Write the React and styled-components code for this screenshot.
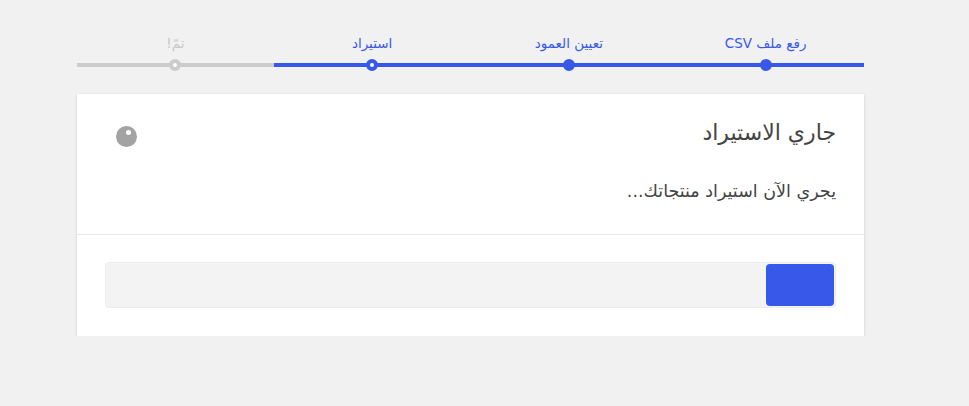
import React from 'react';
import styled, {createGlobalStyle} from 'styled-components';

const GlobalStyle = createGlobalStyle`
  html, body {
    margin: 0;
    padding: 0;
    background: #f1f1f1;
    font-family: "DejaVu Sans", "Liberation Sans", sans-serif;
  }
`

const Page = styled.div`
  width: 787px;
  margin: 0 0 0 77px;
  padding-top: 33px;
  direction: rtl;
`

const Steps = styled.ol`
  display: flex;
  list-style: none;
  margin: 0 0 27px;
  padding: 0;
`

const Step = styled.li`
  position: relative;
  flex: 1;
  text-align: center;
  font-size: 13.5px;
  line-height: 20px;
  padding-bottom: 10px;
  color: ${p => p.state === 'todo' ? '#c8c8c8' : '#3858e9'};
  border-bottom: 4px solid ${p => p.state === 'todo' ? '#cccccc' : '#3858e9'};

  &::before {
    content: "";
    position: absolute;
    bottom: -8px;
    left: 50%;
    margin-left: -6px;
    width: 4px;
    height: 4px;
    border-radius: 50%;
    border: 4px solid ${p => p.state === 'todo' ? '#cccccc' : '#3858e9'};
    background: ${p => p.state === 'done' ? '#3858e9' : '#fff'};
  }
`

const Card = styled.div`
  background: #fff;
  box-shadow: 0 1px 3px rgba(0, 0, 0, 0.15);
`

const Header = styled.header`
  display: flex;
  justify-content: space-between;
  align-items: flex-start;
  padding: 26px 28px 31px 39px;
  border-bottom: 1px solid #e8e8e8;
`

const Heading = styled.div`
  color: #555;
`

const Title = styled.h2`
  margin: 0 0 33px;
  font-size: 22px;
  font-weight: normal;
  line-height: 26px;
  color: #444;
`

const Text = styled.p`
  margin: 0;
  font-size: 17.5px;
  line-height: 24px;
  color: #444;
`

// grey ball with a light spot, like the WP loading spinner
const Spinner = styled.div`
  position: relative;
  width: 21px;
  height: 21px;
  margin-top: 6px;
  border-radius: 50%;
  background: #a3a3a3;

  &::after {
    content: "";
    position: absolute;
    top: 4px;
    left: 10px;
    width: 5px;
    height: 5px;
    border-radius: 50%;
    background: #fff;
  }
`

const Body = styled.section`
  padding: 27px 28px 28px;
`

const Progress = styled.div`
  display: flex;
  height: 42px;
  padding: 1px;
  border: 1px solid #ececec;
  border-radius: 4px;
  background: #f3f3f3;
`

const Bar = styled.div`
  height: 100%;
  background: #3858e9;
  border-radius: 4px;
`

const steps = [
    {label: 'رفع ملف CSV', state: 'done'},
    {label: 'تعيين العمود', state: 'done'},
    {label: 'استيراد', state: 'active'},
    {label: 'تمّ!', state: 'todo'},
]

function App() {
    const percent = 9.4

    return (
        <>
            <GlobalStyle/>
            <Page>
                <Steps>
                    {steps.map(s => (
                        <Step key={s.label} state={s.state}>{s.label}</Step>
                    ))}
                </Steps>
                <Card>
                    <Header>
                        <Heading>
                            <Title>جاري الاستيراد</Title>
                            <Text>يجري الآن استيراد منتجاتك...</Text>
                        </Heading>
                        <Spinner/>
                    </Header>
                    <Body>
                        <Progress>
                            <Bar style={{width: percent + '%'}}/>
                        </Progress>
                    </Body>
                </Card>
            </Page>
        </>
    );
}

export default App;
